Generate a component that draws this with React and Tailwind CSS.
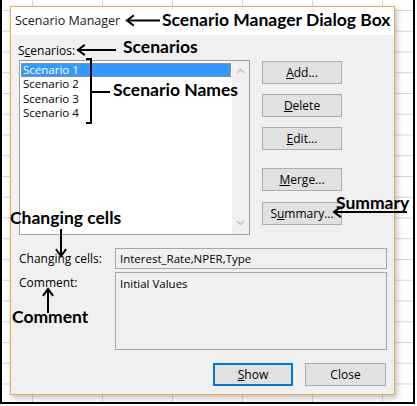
import React from "react";

function Btn({ children, className = "", focused = false }) {
  return (
    <div
      className={
        "h-[23px] flex items-center justify-center bg-[#e1e1e1] text-[12px] text-black " +
        (focused ? "border-2 border-[#0078d7] " : "border border-[#adadad] ") +
        className
      }
    >
      {children}
    </div>
  );
}

function Chevron({ down = false }) {
  return (
    <svg width="9" height="6" viewBox="0 0 9 6" className="block">
      {down ? (
        <polyline points="1,1 4.5,4.5 8,1" fill="none" stroke="#c4c4c4" strokeWidth="1.6" />
      ) : (
        <polyline points="1,5 4.5,1.5 8,5" fill="none" stroke="#c4c4c4" strokeWidth="1.6" />
      )}
    </svg>
  );
}

export default function App() {
  const items = ["Scenario 1", "Scenario 2", "Scenario 3", "Scenario 4"];
  return (
    <div className="w-[417px] h-[406px] bg-white relative overflow-hidden font-['Segoe_UI','Open_Sans',sans-serif]">
      <div className="w-[415px] h-[404px] border-x-2 border-b-2 border-black bg-white bg-[image:linear-gradient(#d6d6d6_1px,transparent_1px),linear-gradient(90deg,#d6d6d6_1px,transparent_1px)] bg-[length:70px_20.75px] bg-[position:30px_10px] pt-[6px] pl-[8px]">
        <div className="w-[385px] h-[389px] border border-[#e9a94f] bg-[#f0f0f0] flex flex-col shadow-[2px_3px_6px_rgba(0,0,0,0.25)]">
          <div className="h-[28px] bg-white flex items-center pl-[4px] text-[12.5px] text-[#1a1a1a]">
            Scenario Manager
          </div>
          <div className="flex-1 flex flex-col text-[12px] text-black">
            <div className="ml-[7px] mt-[8px] h-[16px] leading-[16px]">
              S<span className="underline">c</span>enarios:
            </div>
            <div className="flex mt-[1px] ml-[8px]">
              <div className="w-[231px] h-[175px] border border-[#9e9e9e] bg-white flex">
                <div className="flex-1 pt-[2px] px-[1px]">
                  {items.map((it, i) =>
                    i === 0 ? (
                      <div
                        key={it}
                        className="h-[14.25px] leading-[12px] bg-[#3399ff] text-white border border-dotted border-[#d38a35] pl-[1px] text-[11.5px]"
                      >
                        {it}
                      </div>
                    ) : (
                      <div key={it} className="h-[14.25px] leading-[14.25px] pl-[2px] text-[11.5px] text-black">
                        {it}
                      </div>
                    )
                  )}
                </div>
                <div className="w-[17px] bg-[#f0f0f0] flex flex-col items-center justify-between pt-[7px] pb-[8px]">
                  <Chevron />
                  <Chevron down />
                </div>
              </div>
              <div className="ml-[12px] pt-[1px] flex flex-col">
                <Btn className="w-[80px]">
                  <span className="underline">A</span>dd...
                </Btn>
                <Btn className="w-[80px] mt-[10px]">
                  <span className="underline">D</span>elete
                </Btn>
                <Btn className="w-[80px] mt-[10px]">
                  <span className="underline">E</span>dit...
                </Btn>
                <Btn className="w-[80px] mt-[18px]">
                  <span className="underline">M</span>erge...
                </Btn>
                <Btn className="w-[80px] mt-[11px]">
                  S<span className="underline">u</span>mmary...
                </Btn>
              </div>
            </div>
            <div className="flex items-center mt-[13px] ml-[8px]">
              <div className="w-[96px] leading-[16px]">Changing cells:</div>
              <div className="w-[272px] h-[21px] border border-[#a6a6a6] flex items-center pl-[4px] text-[11.5px]">
                Interest_Rate,NPER,Type
              </div>
            </div>
            <div className="flex mt-[3px] ml-[8px]">
              <div className="w-[96px] leading-[16px] pt-[3px]">Comment:</div>
              <div className="w-[272px] h-[78px] border border-[#a6a6a6] pl-[4px] pt-[3px] leading-[16px] text-[11.5px]">
                Initial Values
              </div>
            </div>
            <div className="flex justify-end mt-[13px] mr-[8px] gap-[12px]">
              <Btn className="w-[80px]" focused>
                <span className="underline">S</span>how
              </Btn>
              <Btn className="w-[81px]">Close</Btn>
            </div>
          </div>
        </div>
      </div>

      {/* annotations */}
      <div className="absolute inset-0 pointer-events-none font-['Lato',sans-serif] font-bold text-[17.5px] leading-[20px] text-black">
        <svg className="absolute left-0 top-0" width="417" height="406" viewBox="0 0 417 406">
          <g fill="none" stroke="#000" strokeWidth="2" strokeLinecap="square">
            <line x1="127" y1="20.5" x2="159" y2="20.5" />
            <polyline points="133,16 127,20.5 133,25" />
            <line x1="78" y1="50" x2="115" y2="50" />
            <polyline points="84,45.5 78,50 84,54.5" />
            <path d="M86 59 H91 V123 H86" strokeLinecap="butt" />
            <line x1="91" y1="92" x2="110" y2="92" strokeLinecap="butt" />
            <line x1="61" y1="229" x2="61" y2="256" strokeLinecap="butt" />
            <polyline points="56.5,250 61,256 65.5,250" />
            <line x1="48" y1="289" x2="48" y2="313" strokeLinecap="butt" />
            <polyline points="43.5,295 48,289 52.5,295" />
            <line x1="334" y1="212" x2="407" y2="212" strokeLinecap="butt" />
            <polyline points="340,207.5 334,212 340,216.5" />
          </g>
        </svg>
        <div className="absolute left-[162px] top-[10px] whitespace-nowrap">Scenario Manager Dialog Box</div>
        <div className="absolute left-[123px] top-[37px] whitespace-nowrap">Scenarios</div>
        <div className="absolute left-[113px] top-[80px] whitespace-nowrap">Scenario Names</div>
        <div className="absolute left-[336px] top-[193px] whitespace-nowrap">Summary</div>
        <div className="absolute left-[10px] top-[208px] whitespace-nowrap">Changing cells</div>
        <div className="absolute left-[12px] top-[307px] whitespace-nowrap">Comment</div>
      </div>
    </div>
  );
}
